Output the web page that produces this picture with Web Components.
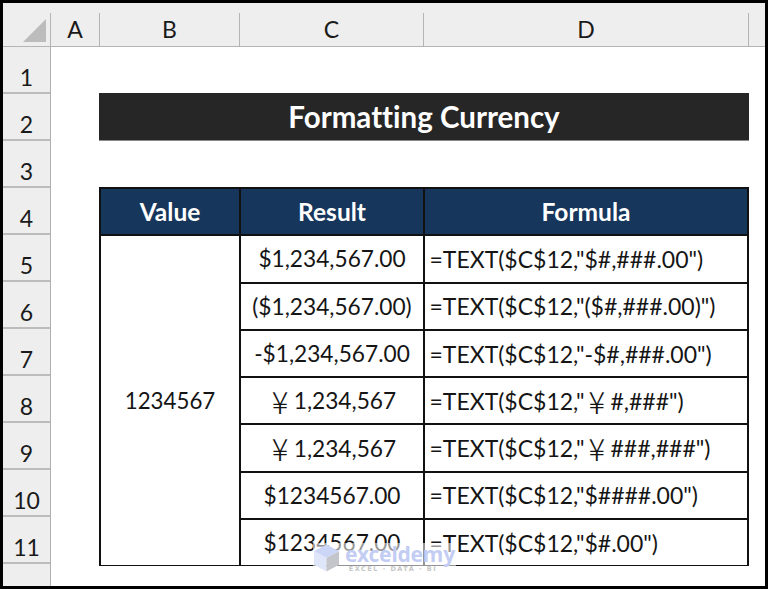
<!DOCTYPE html>
<html lang="en">
<head>
<meta charset="utf-8">
<title>Formatting Currency</title>
<style>
html,body{margin:0;height:100%;overflow:hidden}
body{background:#000;font-family:Lato,"Noto Sans CJK SC",sans-serif;color:#111;font-variant-ligatures:none}
</style>
</head>
<body>
<x-sheet>
  <x-corner slot="corner"></x-corner>
  <x-col style="--w:49px" slot="cols">A</x-col>
  <x-col style="--w:140px" slot="cols">B</x-col>
  <x-col style="--w:184px" slot="cols">C</x-col>
  <x-col style="--w:325px" slot="cols">D</x-col>
  <x-row slot="rows">1</x-row><x-row slot="rows">2</x-row><x-row slot="rows">3</x-row>
  <x-row slot="rows">4</x-row><x-row slot="rows">5</x-row><x-row slot="rows">6</x-row>
  <x-row slot="rows">7</x-row><x-row slot="rows">8</x-row><x-row slot="rows">9</x-row>
  <x-row slot="rows">10</x-row><x-row slot="rows">11</x-row>
  <x-title>Formatting Currency</x-title>
  <x-table>
    <x-cell kind="head">Value</x-cell>
    <x-cell kind="head">Result</x-cell>
    <x-cell kind="head">Formula</x-cell>
    <x-cell kind="merged">1234567</x-cell>
    <x-cell>$1,234,567.00</x-cell><x-cell kind="f">=TEXT($C$12,"$#,###.00")</x-cell>
    <x-cell>($1,234,567.00)</x-cell><x-cell kind="f">=TEXT($C$12,"($#,###.00)")</x-cell>
    <x-cell>-$1,234,567.00</x-cell><x-cell kind="f">=TEXT($C$12,"-$#,###.00")</x-cell>
    <x-cell><x-yen>¥</x-yen> 1,234,567</x-cell><x-cell kind="f">=TEXT($C$12,"<x-yen>¥</x-yen> #,###")</x-cell>
    <x-cell><x-yen>¥</x-yen> 1,234,567</x-cell><x-cell kind="f">=TEXT($C$12,"<x-yen>¥</x-yen> ###,###")</x-cell>
    <x-cell>$1234567.00</x-cell><x-cell kind="f">=TEXT($C$12,"$####.00")</x-cell>
    <x-cell>$1234567.00</x-cell><x-cell kind="f">=TEXT($C$12,"$#.00")</x-cell>
  </x-table>
  <x-mark slot="mark"></x-mark>
</x-sheet>
<script>
function def(name, css, html){
  customElements.define(name, class extends HTMLElement{
    constructor(){super();const r=this.attachShadow({mode:'open'});r.innerHTML='<style>'+css+'</style>'+(html||'<slot></slot>');}
  });
}
def('x-sheet',`
  :host{display:grid;box-sizing:border-box;position:relative;width:762px;height:583px;margin:3px 0 0 3px;
    grid-template-columns:48px 1fr;grid-template-rows:44px 1fr;background:#fff;overflow:hidden}
  .cols{display:flex;background:#eee;border-bottom:1px solid #b4b4b4;box-sizing:border-box;padding-top:10px}
  .rows{display:flex;flex-direction:column;background:#eee;border-right:1px solid #b0b0b0;box-sizing:border-box}
  .canvas{display:flex;flex-direction:column;padding:46px 16px 0 48px;min-width:0}
  .corner{background:#eee;border-bottom:1px solid #b4b4b4;box-sizing:border-box;padding-top:10px}
`,`<div class="corner"><slot name="corner"></slot></div>
   <div class="cols"><slot name="cols"></slot></div>
   <div class="rows"><slot name="rows"></slot></div>
   <div class="canvas"><slot></slot></div>
   <slot name="mark"></slot>`);
def('x-corner',`:host{display:flex;justify-content:flex-end;align-items:flex-end;height:100%;padding:0 4px 4px 0;box-sizing:border-box;border-right:1px solid #b4b4b4}
  svg{display:block}`,
  `<svg width="23" height="23" viewBox="0 0 23 23"><path d="M23 0V23H0Z" fill="#bcbcbc"/></svg>`);
def('x-col',`:host{display:flex;align-items:center;justify-content:center;width:var(--w);flex:none;box-sizing:border-box;
  border-right:1px solid #b4b4b4;font-size:23px;color:#1a1a1a;padding-bottom:2px}`);
def('x-row',`:host{display:flex;align-items:center;justify-content:center;height:47px;flex:none;box-sizing:border-box;
  border-bottom:2px solid #bcbcbc;font-size:23px;color:#1a1a1a;padding-top:16px;line-height:1}`);
def('x-title',`:host{display:flex;align-items:center;justify-content:center;height:48px;flex:none;box-sizing:border-box;
  background:#262626;color:#fff;font-weight:700;font-size:29.5px;margin-bottom:46px;padding-bottom:1px;border-bottom:1px solid #8a8a8a}`);
def('x-table',`:host{display:grid;grid-template-columns:138px 182px 1fr;grid-auto-rows:45.3px;gap:2px;background:#111;border:2px solid #111;box-sizing:border-box;height:379px}
  ::slotted([kind="merged"]){grid-row:2 / span 7;grid-column:1;font-size:22.3px}`);
def('x-cell',`:host{display:flex;align-items:center;justify-content:center;background:#fff;font-size:22.7px;white-space:pre;color:#151515;min-width:0;overflow:hidden}
  :host([kind="head"]){background:#16365c;color:#fff;font-weight:700;font-size:24.5px}
  :host([kind="f"]){justify-content:flex-start;padding-left:4.5px;font-size:23px}`);
def('x-yen',`:host{display:inline;font-family:"Noto Sans CJK JP",sans-serif;font-weight:300;font-size:31px;line-height:0;vertical-align:3px;margin:0 -.5px 0 4px}`);
def('x-mark',`:host{position:absolute;left:310px;top:540px;display:flex;gap:5px;align-items:flex-start;padding:0 1px 0 0;background:rgba(255,255,255,.55);pointer-events:none}
  .n{font:700 21px/21px "Noto Sans",sans-serif;color:#c3cdf3;letter-spacing:-.2px;padding-top:1px}
  .s{font:700 6.5px/8px "DejaVu Sans",sans-serif;color:#c6c6c6;letter-spacing:1.5px;white-space:nowrap;text-align:center;margin-right:14px}
  svg{display:block}`,
  `<svg width="27" height="30" viewBox="0 0 28 30"><path d="M14 1 27 8 14 15 1 8Z" fill="#cbd6f6"/><path d="M1 8 14 15V29L1 22Z" fill="#dfe6fa"/><path d="M27 8 14 15V29L27 22Z" fill="#c4c4cb"/></svg>
   <div><div class="n">exceldemy</div><div class="s">EXCEL · DATA · BI</div></div>`);
</script>
</body>
</html>
